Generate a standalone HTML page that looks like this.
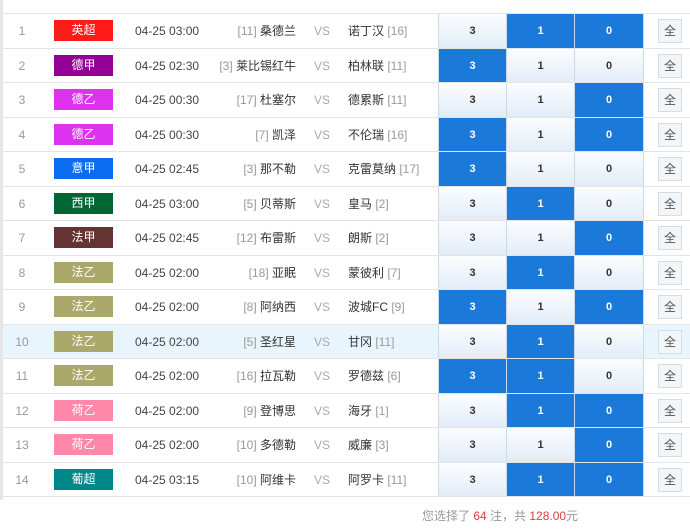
<!DOCTYPE html>
<html><head><meta charset="utf-8"><style>
*{margin:0;padding:0;box-sizing:border-box}
body{width:690px;height:531px;background:#fff;font-family:"Liberation Sans","Noto Sans CJK SC",sans-serif;position:relative;overflow:hidden;font-size:12px;color:#333}
.lb{position:absolute;left:0;top:0;width:3px;height:500px;background:#e6e6e6}
.r{position:absolute;left:3px;width:687px;height:35px;border-top:1px solid #e4e4e4}
.r.hl{background:#e9f5fd}
.r>*{position:absolute;top:0;height:34px;line-height:34px}
.n{left:0;width:38px;text-align:center;color:#999}
.b{left:51px;top:6px!important;width:59px;height:21px!important;line-height:21px!important;text-align:center;color:#fff}
.d{left:132px;color:#444}
.h{right:394px;text-align:right;color:#333;white-space:nowrap}
.g{color:#999}
.v{left:311px;color:#aaa}
.a{left:345px;white-space:nowrap}
.c{width:69px;text-align:center;font-weight:bold;font-size:11px;border-right:1px solid #c9daec;background:linear-gradient(#fbfdff,#e2ecf7);color:#333}
.c.s{background:#1b7ad9;color:#fff}
.c1{left:435px;border-left:1px solid #c9daec}.c2{left:504px;width:68px}.c3{left:572px;width:69px}
.q{left:655px;top:5px!important;width:24px;height:24px!important;line-height:22px!important;border:1px solid #d4dce4;background:#f3f6f9;text-align:center;color:#555;font-size:12px}
.bot{position:absolute;top:496px;left:3px;width:687px;border-top:1px solid #e4e4e4}
.tot{position:absolute;left:422px;top:507px;color:#999;font-size:12px}
.tot b{color:#e03c3c;font-weight:normal}
</style></head><body>
<div class="lb"></div>
<div class="r" style="top:13px"><span class="n">1</span><span class="b" style="background:#ff1a1a">英超</span><span class="d">04-25 03:00</span><span class="h"><span class="g">[11]</span> 桑德兰</span><span class="v">VS</span><span class="a">诺丁汉 <span class="g">[16]</span></span><span class="c c1">3</span><span class="c c2 s">1</span><span class="c c3 s">0</span><span class="q">全</span></div>
<div class="r" style="top:47.5px"><span class="n">2</span><span class="b" style="background:#930096">德甲</span><span class="d">04-25 02:30</span><span class="h"><span class="g">[3]</span> 莱比锡红牛</span><span class="v">VS</span><span class="a">柏林联 <span class="g">[11]</span></span><span class="c c1 s">3</span><span class="c c2">1</span><span class="c c3">0</span><span class="q">全</span></div>
<div class="r" style="top:82px"><span class="n">3</span><span class="b" style="background:#dd33ee">德乙</span><span class="d">04-25 00:30</span><span class="h"><span class="g">[17]</span> 杜塞尔</span><span class="v">VS</span><span class="a">德累斯 <span class="g">[11]</span></span><span class="c c1">3</span><span class="c c2">1</span><span class="c c3 s">0</span><span class="q">全</span></div>
<div class="r" style="top:116.5px"><span class="n">4</span><span class="b" style="background:#dd33ee">德乙</span><span class="d">04-25 00:30</span><span class="h"><span class="g">[7]</span> 凯泽</span><span class="v">VS</span><span class="a">不伦瑞 <span class="g">[16]</span></span><span class="c c1 s">3</span><span class="c c2">1</span><span class="c c3 s">0</span><span class="q">全</span></div>
<div class="r" style="top:151px"><span class="n">5</span><span class="b" style="background:#0a6cf0">意甲</span><span class="d">04-25 02:45</span><span class="h"><span class="g">[3]</span> 那不勒</span><span class="v">VS</span><span class="a">克雷莫纳 <span class="g">[17]</span></span><span class="c c1 s">3</span><span class="c c2">1</span><span class="c c3">0</span><span class="q">全</span></div>
<div class="r" style="top:185.5px"><span class="n">6</span><span class="b" style="background:#006633">西甲</span><span class="d">04-25 03:00</span><span class="h"><span class="g">[5]</span> 贝蒂斯</span><span class="v">VS</span><span class="a">皇马 <span class="g">[2]</span></span><span class="c c1">3</span><span class="c c2 s">1</span><span class="c c3">0</span><span class="q">全</span></div>
<div class="r" style="top:220px"><span class="n">7</span><span class="b" style="background:#663333">法甲</span><span class="d">04-25 02:45</span><span class="h"><span class="g">[12]</span> 布雷斯</span><span class="v">VS</span><span class="a">朗斯 <span class="g">[2]</span></span><span class="c c1">3</span><span class="c c2">1</span><span class="c c3 s">0</span><span class="q">全</span></div>
<div class="r" style="top:254.5px"><span class="n">8</span><span class="b" style="background:#aaa86a">法乙</span><span class="d">04-25 02:00</span><span class="h"><span class="g">[18]</span> 亚眠</span><span class="v">VS</span><span class="a">蒙彼利 <span class="g">[7]</span></span><span class="c c1">3</span><span class="c c2 s">1</span><span class="c c3">0</span><span class="q">全</span></div>
<div class="r" style="top:289px"><span class="n">9</span><span class="b" style="background:#aaa86a">法乙</span><span class="d">04-25 02:00</span><span class="h"><span class="g">[8]</span> 阿纳西</span><span class="v">VS</span><span class="a">波城FC <span class="g">[9]</span></span><span class="c c1 s">3</span><span class="c c2">1</span><span class="c c3 s">0</span><span class="q">全</span></div>
<div class="r hl" style="top:323.5px"><span class="n">10</span><span class="b" style="background:#aaa86a">法乙</span><span class="d">04-25 02:00</span><span class="h"><span class="g">[5]</span> 圣红星</span><span class="v">VS</span><span class="a">甘冈 <span class="g">[11]</span></span><span class="c c1">3</span><span class="c c2 s">1</span><span class="c c3">0</span><span class="q">全</span></div>
<div class="r" style="top:358px"><span class="n">11</span><span class="b" style="background:#aaa86a">法乙</span><span class="d">04-25 02:00</span><span class="h"><span class="g">[16]</span> 拉瓦勒</span><span class="v">VS</span><span class="a">罗德兹 <span class="g">[6]</span></span><span class="c c1 s">3</span><span class="c c2 s">1</span><span class="c c3">0</span><span class="q">全</span></div>
<div class="r" style="top:392.5px"><span class="n">12</span><span class="b" style="background:#ff88aa">荷乙</span><span class="d">04-25 02:00</span><span class="h"><span class="g">[9]</span> 登博思</span><span class="v">VS</span><span class="a">海牙 <span class="g">[1]</span></span><span class="c c1">3</span><span class="c c2 s">1</span><span class="c c3 s">0</span><span class="q">全</span></div>
<div class="r" style="top:427px"><span class="n">13</span><span class="b" style="background:#ff88aa">荷乙</span><span class="d">04-25 02:00</span><span class="h"><span class="g">[10]</span> 多德勒</span><span class="v">VS</span><span class="a">威廉 <span class="g">[3]</span></span><span class="c c1">3</span><span class="c c2">1</span><span class="c c3 s">0</span><span class="q">全</span></div>
<div class="r" style="top:461.5px"><span class="n">14</span><span class="b" style="background:#008787">葡超</span><span class="d">04-25 03:15</span><span class="h"><span class="g">[10]</span> 阿维卡</span><span class="v">VS</span><span class="a">阿罗卡 <span class="g">[11]</span></span><span class="c c1">3</span><span class="c c2 s">1</span><span class="c c3 s">0</span><span class="q">全</span></div>
<div class="bot"></div>
<div class="tot">您选择了 <b>64</b> 注，共 <b>128.00</b>元</div>
</body></html>
